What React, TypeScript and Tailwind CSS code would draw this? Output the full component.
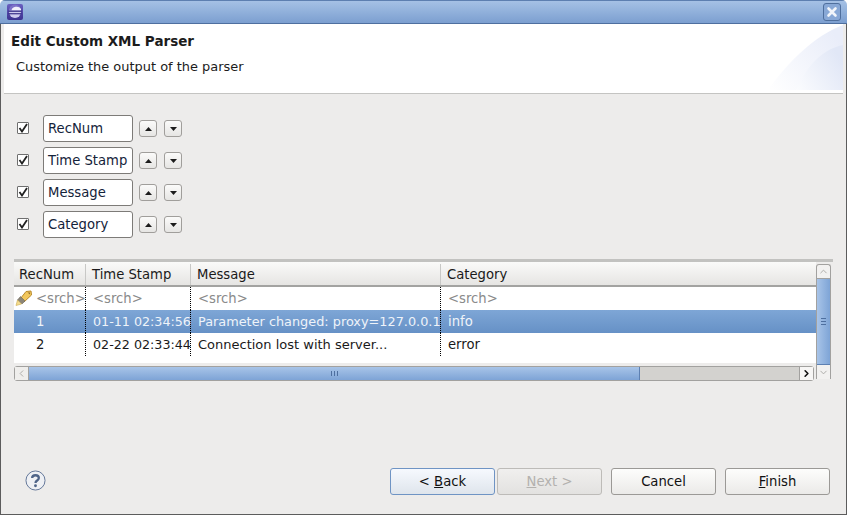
import { ChevronLeft, ChevronRight, ChevronUp, ChevronDown } from "lucide-react";

const columns = [
  { name: "RecNum", w: "w-[72px]", pl: "pl-[5px]" },
  { name: "Time Stamp", w: "w-[105px]", pl: "pl-[6px]" },
  { name: "Message", w: "w-[250px]", pl: "pl-[6px]" },
  { name: "Category", w: "w-[375px]", pl: "pl-[6px]" },
];

const fields = ["RecNum", "Time Stamp", "Message", "Category"];

function ArrowBtn({ up }: { up?: boolean }) {
  return (
    <div className="ml-[6px] mr-[1px] w-[18px] h-[17px] border border-[#a09e9b] rounded-[3px] bg-gradient-to-b from-[#fbfbfa] to-[#e6e5e3] flex items-center justify-center">
      <svg width="7" height="4" viewBox="0 0 7 4">
        <path d={up ? "M3.5 0 L7 4 L0 4 Z" : "M0 0 L7 0 L3.5 4 Z"} fill="#1c1c1c" />
      </svg>
    </div>
  );
}

function FieldRow({ label }: { label: string }) {
  return (
    <div className="flex items-center h-[27px]">
      <div className="w-[12px] h-[12px] -mt-[1px] border border-[#6f6f6f] bg-white flex items-center justify-center rounded-[1px]">
        <svg width="10" height="10" viewBox="0 0 10 10">
          <path d="M1.5 5 L4 8.5 L9 1" fill="none" stroke="#222" strokeWidth="1.8" />
        </svg>
      </div>
      <div className="ml-[14px] w-[90px] h-[27px] bg-white border border-[#7d7b78] rounded-[3px] pl-[4px] leading-[26px] whitespace-nowrap overflow-hidden text-[#14233a]">
        {label}
      </div>
      <ArrowBtn up />
      <ArrowBtn />
    </div>
  );
}

function Row({ cells, selected, search }: { cells: string[]; selected?: boolean; search?: boolean }) {
  const rowCls = selected
    ? "bg-gradient-to-b from-[#7ea6d6] to-[#6691c6] text-[#eef3f9]"
    : search
      ? "text-[#8a8a8a]"
      : "text-[#1a1a1a]";
  return (
    <div className={`flex h-[23px] leading-[24px] whitespace-nowrap ${rowCls}`}>
      <div className="w-[72px] h-full border-r border-dotted border-black relative pl-[22px]">
        {search && (
          <svg className="absolute left-[1px] top-[3px]" width="18" height="16" viewBox="0 0 18 16">
            <path d="M11 1.5 L16 1 L16.5 5 L9 12 L5.5 8.5 Z" fill="#f2c75c" stroke="#b98a2a" strokeWidth="1" />
            <path d="M12.5 2.5 L15 2.5 L15 4.5 Z" fill="#8a6a2c" />
            <path d="M5.5 6.5 L10 11 L7 14 L2.5 10 Z" fill="#8c8577" stroke="#6a6458" strokeWidth="0.6" />
            <path d="M2.5 10 L6.5 14 L1 15.5 Z" fill="#f5dc8e" stroke="#c9a94f" strokeWidth="0.6" />
          </svg>
        )}
        {cells[0]}
      </div>
      <div className={`w-[105px] h-full border-r border-dotted border-black pl-[7px] ${search ? "" : "text-[12.7px]"}`}>{cells[1]}</div>
      <div className={`w-[250px] h-full border-r border-dotted border-black pl-[7px] ${search ? "" : selected ? "text-[12.85px]" : "text-[13px]"}`}>{cells[2]}</div>
      <div className="flex-1 pl-[7px]">{cells[3]}</div>
    </div>
  );
}

function DlgButton({ children, focus, disabled, ml }: { children: React.ReactNode; focus?: boolean; disabled?: boolean; ml: string }) {
  const cls = focus
    ? "border-[#6f94c4] from-[#f6f9fe] to-[#dfe5ec] text-[#111]"
    : disabled
      ? "border-[#bdbbb8] from-[#f0efee] to-[#e3e2e0] text-[#b3b1ae]"
      : "border-[#9b9996] from-[#fdfdfc] to-[#ebeae8] text-[#111]";
  return (
    <div className={`w-[105px] h-[27px] border rounded-[3px] bg-gradient-to-b flex items-center justify-center ${cls} ${ml}`}>
      <span>{children}</span>
    </div>
  );
}

export default function App() {
  return (
    <div className="w-[847px] h-[515px] flex flex-col bg-[#edeceb] overflow-hidden text-[13px] font-['DejaVu_Sans',sans-serif] rounded-t-[5px]">
      {/* title bar */}
      <div className="h-[24px] shrink-0 flex items-center justify-between bg-gradient-to-b from-[#a5c1e5] to-[#7c9fd0] border-b border-[#4e6f9f] border-t border-t-[#5d7fb0]">
        <div className="ml-[7px] w-[16px] h-[16px] bg-gradient-to-b from-[#6a5fc0] to-[#3d3290] rounded-[2px] flex items-center justify-center">
          <svg width="16" height="16" viewBox="0 0 16 16">
            <circle cx="8" cy="8" r="6" fill="#cfcbee" />
            <path d="M2 6.4 A6 6 0 0 1 14 6.4 Z" fill="#7d72c8" />
            <path d="M4.5 6.4 A5 4 0 0 1 14 5 L14 6.4 Z" fill="#f1f0fb" />
            <rect x="1.5" y="6.6" width="13" height="1.2" fill="#2f2580" />
            <rect x="1.5" y="9.2" width="13" height="1.1" fill="#2f2580" />
          </svg>
        </div>
        <div className="mr-[6px] w-[18px] h-[18px] border border-[#4f6f9d] rounded-[3px] bg-[#88a8d6] flex items-center justify-center">
          <svg width="12" height="12" viewBox="0 0 12 12">
            <path d="M2.5 2.5 L9.5 9.5 M9.5 2.5 L2.5 9.5" stroke="#f2f5fa" strokeWidth="2.6" strokeLinecap="round" />
          </svg>
        </div>
      </div>

      <div className="flex-1 flex flex-col border-l border-r border-b border-[#5c5c5c] px-[3px] pb-[1px]">
        {/* header */}
        <div className="h-[70px] shrink-0 bg-white border-b border-[#c4c4c2] relative text-[#1c1c1c]">
          <svg className="absolute right-0 top-0" width="75" height="66" viewBox="0 0 75 66">
            <defs>
              <linearGradient id="hdrA" x1="0" y1="1" x2="1" y2="0.3">
                <stop offset="0" stopColor="#ffffff" />
                <stop offset="1" stopColor="#e9edf9" />
              </linearGradient>
              <linearGradient id="hdrB" x1="0" y1="1" x2="1" y2="0.4">
                <stop offset="0" stopColor="#fbfcfe" />
                <stop offset="1" stopColor="#e1e7f6" />
              </linearGradient>
            </defs>
            <path d="M0 66 C20 38 46 12 75 1 L75 66 Z" fill="url(#hdrA)" />
            <path d="M28 66 C38 44 52 26 75 21 L75 66 Z" fill="url(#hdrB)" />
          </svg>
          <div className="relative pl-[7px] pt-[8px] font-bold leading-[18px] text-[13.5px]">Edit Custom XML Parser</div>
          <div className="relative pl-[12px] pt-[8px] leading-[18px] text-[12.95px]">Customize the output of the parser</div>
        </div>

        {/* fields */}
        <div className="pl-[13px] pt-[21px] flex flex-col gap-[5px] text-[13.2px]">
          {fields.map((f) => (
            <FieldRow key={f} label={f} />
          ))}
        </div>

        {/* table */}
        <div className="mt-[21px] ml-[10px] mr-[10px] border-t-[3px] border-[#c2c2c0] relative h-[122px] text-[13.2px]">
          <div className="w-[802px] bg-white h-[101px]">
            <div className="flex h-[25px] border-b-2 border-[#a3a3a1] bg-gradient-to-b from-[#fafaf9] to-[#e6e5e3] text-[#1a1a1a]">
              {columns.map((c, i) => (
                <div key={c.name} className={`${c.w} ${c.pl} leading-[22px] ${i < 3 ? "border-r border-[#c8c8c6]" : ""} h-[21px] mt-[2px]`}>
                  {c.name}
                </div>
              ))}
            </div>
            <Row search cells={["<srch>", "<srch>", "<srch>", "<srch>"]} />
            <Row selected cells={["1", "01-11 02:34:56", "Parameter changed: proxy=127.0.0.1", "info"]} />
            <Row cells={["2", "02-22 02:33:44", "Connection lost with server...", "error"]} />
          </div>

          {/* horizontal scrollbar */}
          <div className="mt-[3px] w-[800px] h-[15px] flex border border-[#a2a19f] rounded-[3px] bg-[#d3d2cf]">
            <div className="w-[14px] bg-[#efeeec] border-r border-[#a2a19f] flex items-center justify-center text-[#a8a7a4]">
              <ChevronLeft size={11} />
            </div>
            <div className="w-[611px] bg-gradient-to-b from-[#a8c4e8] to-[#7ea4d6] border-r border-[#5d80b2] flex items-center justify-center gap-[2px]">
              <span className="w-px h-[5px] bg-[#4e6f9f]" />
              <span className="w-px h-[5px] bg-[#4e6f9f]" />
              <span className="w-px h-[5px] bg-[#4e6f9f]" />
            </div>
            <div className="flex-1" />
            <div className="w-[14px] bg-[#f7f6f5] border-l border-[#a2a19f] flex items-center justify-center text-[#111]">
              <ChevronRight size={11} strokeWidth={3.5} />
            </div>
          </div>

          {/* vertical scrollbar */}
          <div className="absolute left-[802px] top-[2px] w-[15px] h-[115px] flex flex-col border-x border-t border-[#a2a19f] rounded-t-[3px] bg-[#f2f1f0]">
            <div className="h-[14px] flex items-center justify-center text-[#a8a7a4] border-b border-[#a2a19f]">
              <ChevronUp size={11} />
            </div>
            <div className="flex-1 bg-gradient-to-r from-[#a8c4e8] to-[#7ea4d6] border-b border-[#5d80b2] flex flex-col items-center justify-center gap-[2px]">
              <span className="h-px w-[5px] bg-[#4e6f9f]" />
              <span className="h-px w-[5px] bg-[#4e6f9f]" />
              <span className="h-px w-[5px] bg-[#4e6f9f]" />
            </div>
            <div className="h-[14px] flex items-center justify-center text-[#a8a7a4]">
              <ChevronDown size={11} />
            </div>
          </div>
        </div>

        {/* footer */}
        <div className="flex items-center mt-[87px] h-[27px] pl-[21px] pr-[13px] text-[13.2px]">
          <svg className="-mt-[3px]" width="21" height="21" viewBox="0 0 22 22">
            <circle cx="11" cy="11" r="10" fill="#eef0f4" stroke="#5f7396" strokeWidth="1" />
            <path d="M7.5 8.5 C7.5 4.5 14.5 4.5 14.5 8.5 C14.5 11 11 11 11 13.5" fill="none" stroke="#4f6488" strokeWidth="2.4" />
            <circle cx="11" cy="16.5" r="1.5" fill="#4f6488" />
          </svg>
          <div className="flex-1" />
          <DlgButton focus ml="ml-0">
            &lt; <u>B</u>ack
          </DlgButton>
          <DlgButton disabled ml="ml-[2px]">
            <u>N</u>ext &gt;
          </DlgButton>
          <DlgButton ml="ml-[9px]">Cancel</DlgButton>
          <DlgButton ml="ml-[9px]">
            <u>F</u>inish
          </DlgButton>
        </div>
      </div>
    </div>
  );
}
